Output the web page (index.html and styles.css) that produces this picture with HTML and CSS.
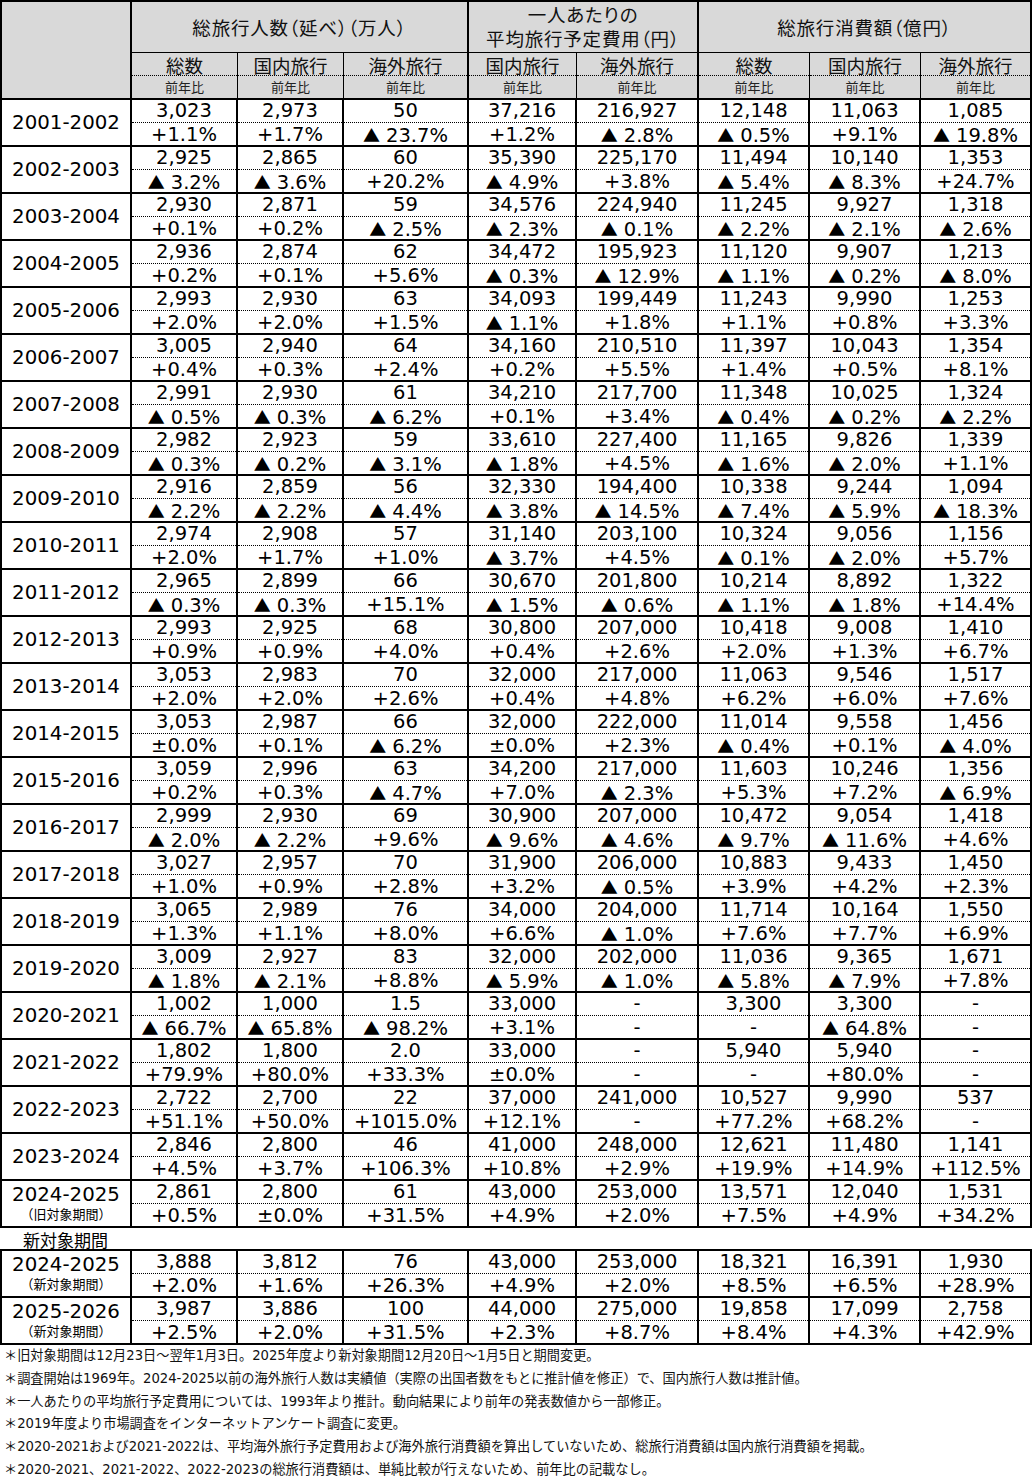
FILE: index.html
```html
<!DOCTYPE html>
<html lang="ja">
<head>
<meta charset="utf-8">
<title>年末年始の旅行動向</title>
<link rel="stylesheet" href="styles.css">
</head>
<body>
<table class="tbl">
<colgroup>
<col class="w-lab"><col class="w-a"><col class="w-a"><col class="w-b"><col class="w-c"><col class="w-d"><col class="w-e"><col class="w-e"><col class="w-e">
</colgroup>
<thead>
<tr class="h1">
<th class="corner" rowspan="2"></th>
<th class="grp" colspan="3"><div class="gh">総旅行人数（延べ）（万人）</div></th>
<th class="grp" colspan="2"><div class="gh two">一人あたりの<br>平均旅行予定費用（円）</div></th>
<th class="grp" colspan="3"><div class="gh">総旅行消費額（億円）</div></th>
</tr>
<tr class="h2">
<th class="sub in"><div class="sv">総数</div><div class="sc">前年比</div></th>
<th class="sub in"><div class="sv">国内旅行</div><div class="sc">前年比</div></th>
<th class="sub"><div class="sv">海外旅行</div><div class="sc">前年比</div></th>
<th class="sub in"><div class="sv">国内旅行</div><div class="sc">前年比</div></th>
<th class="sub"><div class="sv">海外旅行</div><div class="sc">前年比</div></th>
<th class="sub in"><div class="sv">総数</div><div class="sc">前年比</div></th>
<th class="sub in"><div class="sv">国内旅行</div><div class="sc">前年比</div></th>
<th class="sub"><div class="sv">海外旅行</div><div class="sc">前年比</div></th>
</tr>
</thead>
<tbody>
<tr><th class="lab">2001-2002</th><td><div class="v">3,023</div><div class="c">+1.1%</div></td><td><div class="v">2,973</div><div class="c">+1.7%</div></td><td><div class="v">50</div><div class="c"><span class="tri">▲</span>23.7%</div></td><td><div class="v">37,216</div><div class="c">+1.2%</div></td><td><div class="v">216,927</div><div class="c"><span class="tri">▲</span>2.8%</div></td><td><div class="v">12,148</div><div class="c"><span class="tri">▲</span>0.5%</div></td><td><div class="v">11,063</div><div class="c">+9.1%</div></td><td><div class="v">1,085</div><div class="c"><span class="tri">▲</span>19.8%</div></td></tr>
<tr><th class="lab">2002-2003</th><td><div class="v">2,925</div><div class="c"><span class="tri">▲</span>3.2%</div></td><td><div class="v">2,865</div><div class="c"><span class="tri">▲</span>3.6%</div></td><td><div class="v">60</div><div class="c">+20.2%</div></td><td><div class="v">35,390</div><div class="c"><span class="tri">▲</span>4.9%</div></td><td><div class="v">225,170</div><div class="c">+3.8%</div></td><td><div class="v">11,494</div><div class="c"><span class="tri">▲</span>5.4%</div></td><td><div class="v">10,140</div><div class="c"><span class="tri">▲</span>8.3%</div></td><td><div class="v">1,353</div><div class="c">+24.7%</div></td></tr>
<tr><th class="lab">2003-2004</th><td><div class="v">2,930</div><div class="c">+0.1%</div></td><td><div class="v">2,871</div><div class="c">+0.2%</div></td><td><div class="v">59</div><div class="c"><span class="tri">▲</span>2.5%</div></td><td><div class="v">34,576</div><div class="c"><span class="tri">▲</span>2.3%</div></td><td><div class="v">224,940</div><div class="c"><span class="tri">▲</span>0.1%</div></td><td><div class="v">11,245</div><div class="c"><span class="tri">▲</span>2.2%</div></td><td><div class="v">9,927</div><div class="c"><span class="tri">▲</span>2.1%</div></td><td><div class="v">1,318</div><div class="c"><span class="tri">▲</span>2.6%</div></td></tr>
<tr><th class="lab">2004-2005</th><td><div class="v">2,936</div><div class="c">+0.2%</div></td><td><div class="v">2,874</div><div class="c">+0.1%</div></td><td><div class="v">62</div><div class="c">+5.6%</div></td><td><div class="v">34,472</div><div class="c"><span class="tri">▲</span>0.3%</div></td><td><div class="v">195,923</div><div class="c"><span class="tri">▲</span>12.9%</div></td><td><div class="v">11,120</div><div class="c"><span class="tri">▲</span>1.1%</div></td><td><div class="v">9,907</div><div class="c"><span class="tri">▲</span>0.2%</div></td><td><div class="v">1,213</div><div class="c"><span class="tri">▲</span>8.0%</div></td></tr>
<tr><th class="lab">2005-2006</th><td><div class="v">2,993</div><div class="c">+2.0%</div></td><td><div class="v">2,930</div><div class="c">+2.0%</div></td><td><div class="v">63</div><div class="c">+1.5%</div></td><td><div class="v">34,093</div><div class="c"><span class="tri">▲</span>1.1%</div></td><td><div class="v">199,449</div><div class="c">+1.8%</div></td><td><div class="v">11,243</div><div class="c">+1.1%</div></td><td><div class="v">9,990</div><div class="c">+0.8%</div></td><td><div class="v">1,253</div><div class="c">+3.3%</div></td></tr>
<tr><th class="lab">2006-2007</th><td><div class="v">3,005</div><div class="c">+0.4%</div></td><td><div class="v">2,940</div><div class="c">+0.3%</div></td><td><div class="v">64</div><div class="c">+2.4%</div></td><td><div class="v">34,160</div><div class="c">+0.2%</div></td><td><div class="v">210,510</div><div class="c">+5.5%</div></td><td><div class="v">11,397</div><div class="c">+1.4%</div></td><td><div class="v">10,043</div><div class="c">+0.5%</div></td><td><div class="v">1,354</div><div class="c">+8.1%</div></td></tr>
<tr><th class="lab">2007-2008</th><td><div class="v">2,991</div><div class="c"><span class="tri">▲</span>0.5%</div></td><td><div class="v">2,930</div><div class="c"><span class="tri">▲</span>0.3%</div></td><td><div class="v">61</div><div class="c"><span class="tri">▲</span>6.2%</div></td><td><div class="v">34,210</div><div class="c">+0.1%</div></td><td><div class="v">217,700</div><div class="c">+3.4%</div></td><td><div class="v">11,348</div><div class="c"><span class="tri">▲</span>0.4%</div></td><td><div class="v">10,025</div><div class="c"><span class="tri">▲</span>0.2%</div></td><td><div class="v">1,324</div><div class="c"><span class="tri">▲</span>2.2%</div></td></tr>
<tr><th class="lab">2008-2009</th><td><div class="v">2,982</div><div class="c"><span class="tri">▲</span>0.3%</div></td><td><div class="v">2,923</div><div class="c"><span class="tri">▲</span>0.2%</div></td><td><div class="v">59</div><div class="c"><span class="tri">▲</span>3.1%</div></td><td><div class="v">33,610</div><div class="c"><span class="tri">▲</span>1.8%</div></td><td><div class="v">227,400</div><div class="c">+4.5%</div></td><td><div class="v">11,165</div><div class="c"><span class="tri">▲</span>1.6%</div></td><td><div class="v">9,826</div><div class="c"><span class="tri">▲</span>2.0%</div></td><td><div class="v">1,339</div><div class="c">+1.1%</div></td></tr>
<tr><th class="lab">2009-2010</th><td><div class="v">2,916</div><div class="c"><span class="tri">▲</span>2.2%</div></td><td><div class="v">2,859</div><div class="c"><span class="tri">▲</span>2.2%</div></td><td><div class="v">56</div><div class="c"><span class="tri">▲</span>4.4%</div></td><td><div class="v">32,330</div><div class="c"><span class="tri">▲</span>3.8%</div></td><td><div class="v">194,400</div><div class="c"><span class="tri">▲</span>14.5%</div></td><td><div class="v">10,338</div><div class="c"><span class="tri">▲</span>7.4%</div></td><td><div class="v">9,244</div><div class="c"><span class="tri">▲</span>5.9%</div></td><td><div class="v">1,094</div><div class="c"><span class="tri">▲</span>18.3%</div></td></tr>
<tr><th class="lab">2010-2011</th><td><div class="v">2,974</div><div class="c">+2.0%</div></td><td><div class="v">2,908</div><div class="c">+1.7%</div></td><td><div class="v">57</div><div class="c">+1.0%</div></td><td><div class="v">31,140</div><div class="c"><span class="tri">▲</span>3.7%</div></td><td><div class="v">203,100</div><div class="c">+4.5%</div></td><td><div class="v">10,324</div><div class="c"><span class="tri">▲</span>0.1%</div></td><td><div class="v">9,056</div><div class="c"><span class="tri">▲</span>2.0%</div></td><td><div class="v">1,156</div><div class="c">+5.7%</div></td></tr>
<tr><th class="lab">2011-2012</th><td><div class="v">2,965</div><div class="c"><span class="tri">▲</span>0.3%</div></td><td><div class="v">2,899</div><div class="c"><span class="tri">▲</span>0.3%</div></td><td><div class="v">66</div><div class="c">+15.1%</div></td><td><div class="v">30,670</div><div class="c"><span class="tri">▲</span>1.5%</div></td><td><div class="v">201,800</div><div class="c"><span class="tri">▲</span>0.6%</div></td><td><div class="v">10,214</div><div class="c"><span class="tri">▲</span>1.1%</div></td><td><div class="v">8,892</div><div class="c"><span class="tri">▲</span>1.8%</div></td><td><div class="v">1,322</div><div class="c">+14.4%</div></td></tr>
<tr><th class="lab">2012-2013</th><td><div class="v">2,993</div><div class="c">+0.9%</div></td><td><div class="v">2,925</div><div class="c">+0.9%</div></td><td><div class="v">68</div><div class="c">+4.0%</div></td><td><div class="v">30,800</div><div class="c">+0.4%</div></td><td><div class="v">207,000</div><div class="c">+2.6%</div></td><td><div class="v">10,418</div><div class="c">+2.0%</div></td><td><div class="v">9,008</div><div class="c">+1.3%</div></td><td><div class="v">1,410</div><div class="c">+6.7%</div></td></tr>
<tr><th class="lab">2013-2014</th><td><div class="v">3,053</div><div class="c">+2.0%</div></td><td><div class="v">2,983</div><div class="c">+2.0%</div></td><td><div class="v">70</div><div class="c">+2.6%</div></td><td><div class="v">32,000</div><div class="c">+0.4%</div></td><td><div class="v">217,000</div><div class="c">+4.8%</div></td><td><div class="v">11,063</div><div class="c">+6.2%</div></td><td><div class="v">9,546</div><div class="c">+6.0%</div></td><td><div class="v">1,517</div><div class="c">+7.6%</div></td></tr>
<tr><th class="lab">2014-2015</th><td><div class="v">3,053</div><div class="c">±0.0%</div></td><td><div class="v">2,987</div><div class="c">+0.1%</div></td><td><div class="v">66</div><div class="c"><span class="tri">▲</span>6.2%</div></td><td><div class="v">32,000</div><div class="c">±0.0%</div></td><td><div class="v">222,000</div><div class="c">+2.3%</div></td><td><div class="v">11,014</div><div class="c"><span class="tri">▲</span>0.4%</div></td><td><div class="v">9,558</div><div class="c">+0.1%</div></td><td><div class="v">1,456</div><div class="c"><span class="tri">▲</span>4.0%</div></td></tr>
<tr><th class="lab">2015-2016</th><td><div class="v">3,059</div><div class="c">+0.2%</div></td><td><div class="v">2,996</div><div class="c">+0.3%</div></td><td><div class="v">63</div><div class="c"><span class="tri">▲</span>4.7%</div></td><td><div class="v">34,200</div><div class="c">+7.0%</div></td><td><div class="v">217,000</div><div class="c"><span class="tri">▲</span>2.3%</div></td><td><div class="v">11,603</div><div class="c">+5.3%</div></td><td><div class="v">10,246</div><div class="c">+7.2%</div></td><td><div class="v">1,356</div><div class="c"><span class="tri">▲</span>6.9%</div></td></tr>
<tr><th class="lab">2016-2017</th><td><div class="v">2,999</div><div class="c"><span class="tri">▲</span>2.0%</div></td><td><div class="v">2,930</div><div class="c"><span class="tri">▲</span>2.2%</div></td><td><div class="v">69</div><div class="c">+9.6%</div></td><td><div class="v">30,900</div><div class="c"><span class="tri">▲</span>9.6%</div></td><td><div class="v">207,000</div><div class="c"><span class="tri">▲</span>4.6%</div></td><td><div class="v">10,472</div><div class="c"><span class="tri">▲</span>9.7%</div></td><td><div class="v">9,054</div><div class="c"><span class="tri">▲</span>11.6%</div></td><td><div class="v">1,418</div><div class="c">+4.6%</div></td></tr>
<tr><th class="lab">2017-2018</th><td><div class="v">3,027</div><div class="c">+1.0%</div></td><td><div class="v">2,957</div><div class="c">+0.9%</div></td><td><div class="v">70</div><div class="c">+2.8%</div></td><td><div class="v">31,900</div><div class="c">+3.2%</div></td><td><div class="v">206,000</div><div class="c"><span class="tri">▲</span>0.5%</div></td><td><div class="v">10,883</div><div class="c">+3.9%</div></td><td><div class="v">9,433</div><div class="c">+4.2%</div></td><td><div class="v">1,450</div><div class="c">+2.3%</div></td></tr>
<tr><th class="lab">2018-2019</th><td><div class="v">3,065</div><div class="c">+1.3%</div></td><td><div class="v">2,989</div><div class="c">+1.1%</div></td><td><div class="v">76</div><div class="c">+8.0%</div></td><td><div class="v">34,000</div><div class="c">+6.6%</div></td><td><div class="v">204,000</div><div class="c"><span class="tri">▲</span>1.0%</div></td><td><div class="v">11,714</div><div class="c">+7.6%</div></td><td><div class="v">10,164</div><div class="c">+7.7%</div></td><td><div class="v">1,550</div><div class="c">+6.9%</div></td></tr>
<tr><th class="lab">2019-2020</th><td><div class="v">3,009</div><div class="c"><span class="tri">▲</span>1.8%</div></td><td><div class="v">2,927</div><div class="c"><span class="tri">▲</span>2.1%</div></td><td><div class="v">83</div><div class="c">+8.8%</div></td><td><div class="v">32,000</div><div class="c"><span class="tri">▲</span>5.9%</div></td><td><div class="v">202,000</div><div class="c"><span class="tri">▲</span>1.0%</div></td><td><div class="v">11,036</div><div class="c"><span class="tri">▲</span>5.8%</div></td><td><div class="v">9,365</div><div class="c"><span class="tri">▲</span>7.9%</div></td><td><div class="v">1,671</div><div class="c">+7.8%</div></td></tr>
<tr><th class="lab">2020-2021</th><td><div class="v">1,002</div><div class="c"><span class="tri">▲</span>66.7%</div></td><td><div class="v">1,000</div><div class="c"><span class="tri">▲</span>65.8%</div></td><td><div class="v">1.5</div><div class="c"><span class="tri">▲</span>98.2%</div></td><td><div class="v">33,000</div><div class="c">+3.1%</div></td><td><div class="v">-</div><div class="c">-</div></td><td><div class="v">3,300</div><div class="c">-</div></td><td><div class="v">3,300</div><div class="c"><span class="tri">▲</span>64.8%</div></td><td><div class="v">-</div><div class="c">-</div></td></tr>
<tr><th class="lab">2021-2022</th><td><div class="v">1,802</div><div class="c">+79.9%</div></td><td><div class="v">1,800</div><div class="c">+80.0%</div></td><td><div class="v">2.0</div><div class="c">+33.3%</div></td><td><div class="v">33,000</div><div class="c">±0.0%</div></td><td><div class="v">-</div><div class="c">-</div></td><td><div class="v">5,940</div><div class="c">-</div></td><td><div class="v">5,940</div><div class="c">+80.0%</div></td><td><div class="v">-</div><div class="c">-</div></td></tr>
<tr><th class="lab">2022-2023</th><td><div class="v">2,722</div><div class="c">+51.1%</div></td><td><div class="v">2,700</div><div class="c">+50.0%</div></td><td><div class="v">22</div><div class="c">+1015.0%</div></td><td><div class="v">37,000</div><div class="c">+12.1%</div></td><td><div class="v">241,000</div><div class="c">-</div></td><td><div class="v">10,527</div><div class="c">+77.2%</div></td><td><div class="v">9,990</div><div class="c">+68.2%</div></td><td><div class="v">537</div><div class="c">-</div></td></tr>
<tr><th class="lab">2023-2024</th><td><div class="v">2,846</div><div class="c">+4.5%</div></td><td><div class="v">2,800</div><div class="c">+3.7%</div></td><td><div class="v">46</div><div class="c">+106.3%</div></td><td><div class="v">41,000</div><div class="c">+10.8%</div></td><td><div class="v">248,000</div><div class="c">+2.9%</div></td><td><div class="v">12,621</div><div class="c">+19.9%</div></td><td><div class="v">11,480</div><div class="c">+14.9%</div></td><td><div class="v">1,141</div><div class="c">+112.5%</div></td></tr>
<tr><th class="lab"><div class="lm">2024-2025</div><div class="ls">（旧対象期間）</div></th><td><div class="v">2,861</div><div class="c">+0.5%</div></td><td><div class="v">2,800</div><div class="c">±0.0%</div></td><td><div class="v">61</div><div class="c">+31.5%</div></td><td><div class="v">43,000</div><div class="c">+4.9%</div></td><td><div class="v">253,000</div><div class="c">+2.0%</div></td><td><div class="v">13,571</div><div class="c">+7.5%</div></td><td><div class="v">12,040</div><div class="c">+4.9%</div></td><td><div class="v">1,531</div><div class="c">+34.2%</div></td></tr>
</tbody>
</table>

<div class="newlabel">新対象期間</div>

<table class="tbl">
<colgroup>
<col class="w-lab"><col class="w-a"><col class="w-a"><col class="w-b"><col class="w-c"><col class="w-d"><col class="w-e"><col class="w-e"><col class="w-e">
</colgroup>
<tbody>
<tr><th class="lab"><div class="lm">2024-2025</div><div class="ls">（新対象期間）</div></th><td><div class="v">3,888</div><div class="c">+2.0%</div></td><td><div class="v">3,812</div><div class="c">+1.6%</div></td><td><div class="v">76</div><div class="c">+26.3%</div></td><td><div class="v">43,000</div><div class="c">+4.9%</div></td><td><div class="v">253,000</div><div class="c">+2.0%</div></td><td><div class="v">18,321</div><div class="c">+8.5%</div></td><td><div class="v">16,391</div><div class="c">+6.5%</div></td><td><div class="v">1,930</div><div class="c">+28.9%</div></td></tr>
<tr><th class="lab"><div class="lm">2025-2026</div><div class="ls">（新対象期間）</div></th><td><div class="v">3,987</div><div class="c">+2.5%</div></td><td><div class="v">3,886</div><div class="c">+2.0%</div></td><td><div class="v">100</div><div class="c">+31.5%</div></td><td><div class="v">44,000</div><div class="c">+2.3%</div></td><td><div class="v">275,000</div><div class="c">+8.7%</div></td><td><div class="v">19,858</div><div class="c">+8.4%</div></td><td><div class="v">17,099</div><div class="c">+4.3%</div></td><td><div class="v">2,758</div><div class="c">+42.9%</div></td></tr>
</tbody>
</table>

<div class="notes">
<p>＊旧対象期間は12月23日～翌年1月3日。2025年度より新対象期間12月20日～1月5日と期間変更。</p>
<p>＊調査開始は1969年。2024-2025以前の海外旅行人数は実績値（実際の出国者数をもとに推計値を修正）で、国内旅行人数は推計値。</p>
<p>＊一人あたりの平均旅行予定費用については、1993年より推計。動向結果により前年の発表数値から一部修正。</p>
<p>＊2019年度より市場調査をインターネットアンケート調査に変更。</p>
<p>＊2020-2021および2021-2022は、平均海外旅行予定費用および海外旅行消費額を算出していないため、総旅行消費額は国内旅行消費額を掲載。</p>
<p>＊2020-2021、2021-2022、2022-2023の総旅行消費額は、単純比較が行えないため、前年比の記載なし。</p>
</div>
</body>
</html>
```

FILE: styles.css
```css
html, body {
  margin: 0;
  padding: 0;
  background: #ffffff;
}

body {
  width: 1032px;
  font-family: "DejaVu Sans", "Noto Sans CJK JP", sans-serif;
  color: #000000;
}

.tbl {
  width: 1032px;
  table-layout: fixed;
  border-collapse: separate;
  border-spacing: 0;
  border-top: 2px solid #000;
  border-left: 2px solid #000;
}

.w-lab { width: 130px; }
.w-a { width: 106px; }
.w-b { width: 125px; }
.w-c { width: 108px; }
.w-d { width: 122px; }
.w-e { width: 111px; }

.tbl th,
.tbl td {
  padding: 0;
  text-align: center;
  vertical-align: middle;
  border-right: 2px solid #000;
  border-bottom: 2px solid #000;
  font-weight: normal;
}

/* header */
.corner,
.grp,
.sub {
  background: #d9d9d9;
}

.h1 .grp {
  border-bottom: 1px solid #000;
}

.gh {
  height: 50px;
  display: flex;
  align-items: center;
  justify-content: center;
  font-family: "Noto Sans CJK JP", sans-serif;
  font-size: 18.5px;
  line-height: 24px;
  color: #111;
  font-feature-settings: "palt";
  letter-spacing: 0.8px;
}

.gh.two {
  padding-bottom: 2px;
  box-sizing: border-box;
}

.sub.in {
  border-right: 1px solid #000;
}

.sv {
  height: 23px;
  box-sizing: border-box;
  border-bottom: 1px dotted #000;
  font-family: "Noto Sans CJK JP", sans-serif;
  font-size: 18.5px;
  line-height: 24px;
  color: #111;
}

.sc {
  height: 22px;
  font-family: "Noto Sans CJK JP", sans-serif;
  font-size: 13px;
  line-height: 22px;
  color: #222;
}

/* body */
.lab {
  background: #fff;
  font-size: 19.8px;
  line-height: 22px;
}

.lm {
  font-size: 19.8px;
  line-height: 22px;
}

.ls {
  font-family: "Noto Sans CJK JP", sans-serif;
  font-size: 13px;
  line-height: 16px;
  padding-bottom: 2px;
}

.v {
  height: 23px;
  box-sizing: border-box;
  border-bottom: 1px dotted #000;
  font-size: 19.5px;
  line-height: 22px;
  white-space: nowrap;
}

.c {
  height: 22px;
  font-size: 19.5px;
  line-height: 23px;
  white-space: nowrap;
}

.tri {
  font-family: "Noto Sans CJK JP", sans-serif;
  font-size: 17px;
  margin-right: 6px;
}

.newlabel {
  height: 21px;
  padding-left: 23px;
  font-family: "Noto Sans CJK JP", sans-serif;
  font-size: 17px;
  line-height: 24px;
}

.notes {
  padding-left: 4px;
  font-size: 13.2px;
  color: #111;
}

.notes p {
  margin: 0;
  line-height: 22.8px;
  white-space: nowrap;
}
```
